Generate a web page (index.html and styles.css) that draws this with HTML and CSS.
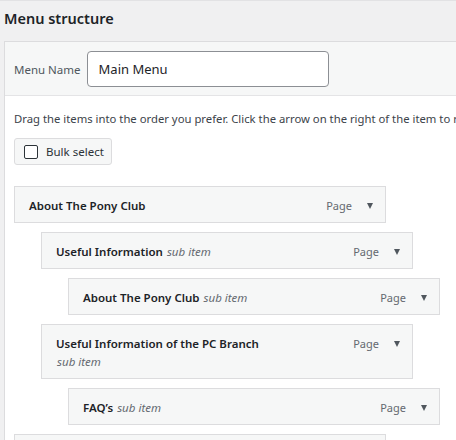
FILE: index.html
```html
<!DOCTYPE html>
<html lang="en">
<head>
<meta charset="UTF-8">
<title>Menus</title>
<link rel="stylesheet" href="styles.css">
</head>
<body>
<h2 class="section-title">Menu structure</h2>
<div class="menu-edit">
  <div class="menu-header">
    <label class="menu-name-label" for="menu-name">Menu Name</label>
    <input id="menu-name" class="menu-name" type="text" value="Main Menu">
  </div>
  <div class="menu-body">
    <p class="drag-hint">Drag the items into the order you prefer. Click the arrow on the right of the item to reveal additional configuration options.</p>
    <button class="bulk-btn"><span class="check"></span>Bulk select</button>
    <ul class="menu-items">
      <li class="item depth-0"><span class="item-title">About The Pony Club</span><span class="item-controls"><span class="item-type">Page</span><span class="arrow"></span></span></li>
      <li class="item depth-1"><span class="item-title">Useful Information <em class="sub">sub item</em></span><span class="item-controls"><span class="item-type">Page</span><span class="arrow"></span></span></li>
      <li class="item depth-2"><span class="item-title">About The Pony Club <em class="sub">sub item</em></span><span class="item-controls"><span class="item-type">Page</span><span class="arrow"></span></span></li>
      <li class="item depth-1"><span class="item-title">Useful Information of the PC Branch <em class="sub">sub item</em></span><span class="item-controls"><span class="item-type">Page</span><span class="arrow"></span></span></li>
      <li class="item depth-2"><span class="item-title">FAQ’s <em class="sub">sub item</em></span><span class="item-controls"><span class="item-type">Page</span><span class="arrow"></span></span></li>
      <li class="item depth-0"><span class="item-title">Contact Us</span><span class="item-controls"><span class="item-type">Page</span><span class="arrow"></span></span></li>
    </ul>
  </div>
</div>
</body>
</html>
```

FILE: styles.css
```css
*{margin:0;padding:0;box-sizing:border-box}
body{background:#f0f0f1;font-family:'Noto Sans','Open Sans',sans-serif;font-size:11.5px;color:#3c434a;overflow:hidden;border-top:1px solid #e2e2e4}
.section-title{font-size:14.5px;font-weight:600;color:#1d2327;padding:6px 4px 0;height:40px;line-height:22px}
.menu-edit{margin-left:4px;border-left:1px solid #dcdcde;border-top:1px solid #dcdcde;background:#fff}
.menu-header{display:flex;align-items:center;gap:6px;padding:9px 9px 8px;background:#f6f7f7;border-bottom:1px solid #e4e4e6}
.menu-name-label{color:#50575e;font-size:11.5px}
.menu-name{width:242px;height:36px;border:1px solid #8c8f94;border-radius:4px;padding:0 11px;font-family:inherit;font-size:13px;color:#1d2327;background:#fff;outline:none}
.menu-body{padding:14px 0 0 9px}
.drag-hint{white-space:nowrap;color:#3c434a;line-height:18px;font-size:11.3px}
.bulk-btn{display:flex;align-items:center;gap:8px;margin-top:10px;height:27px;padding:0 7px 0 9px;background:#f6f7f7;border:1px solid #dcdcde;border-radius:3px;font-family:inherit;font-size:11.5px;color:#2c3338;white-space:nowrap}
.check{width:14px;height:14px;border:1px solid #2c3338;border-radius:2px;background:#fff}
.menu-items{list-style:none;margin-top:21px}
.item{display:flex;align-items:flex-start;width:372px;margin-bottom:9px;padding:10px 12px 7px 14px;background:#f6f7f7;border:1px solid #dcdcde;line-height:18px}
.depth-1{margin-left:27px}
.depth-2{margin-left:54px}
.item-title{flex:1;font-weight:600;color:#1d2327;margin-right:85px}
.sub{font-style:italic;font-weight:400;color:#646970;margin-left:1px}
.item-controls{display:flex;align-items:center;gap:15px;color:#646970;font-size:11px}
.arrow{width:0;height:0;border-left:3.5px solid transparent;border-right:3.5px solid transparent;border-top:6px solid #50575e}
```
